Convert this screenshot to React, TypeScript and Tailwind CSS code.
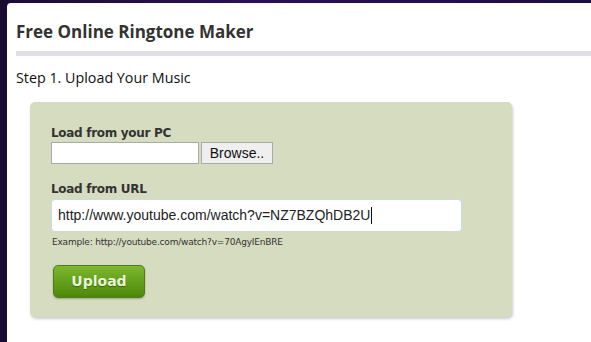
export default function App() {
  return (
    <div className="h-[342px] w-[591px] overflow-hidden bg-[linear-gradient(90deg,#1a0b33,#2a0f5a_40%,#1c0c4a)] pl-[7px] pt-[3px]">
      <div className="h-full rounded-tl-[4px] bg-white pl-[9px]">
        <h1 className="pt-[17px] text-[17px] font-bold leading-[24px] text-[#333] [font-family:'Open_Sans',sans-serif]">
          Free Online Ringtone Maker
        </h1>
        <div className="mt-[7px] h-[5px] bg-[#dde1e5]" />
        <p className="mt-[12px] text-[14.3px] leading-[20px] text-[#111] [font-family:'Open_Sans',sans-serif]">
          Step 1. Upload Your Music
        </p>
        <div className="ml-[14px] mt-[14px] h-[215px] w-[482px] rounded-[5px] bg-[#d6dcbf] pl-[21px] pt-[23px] shadow-[1px_2px_3px_rgba(0,0,0,0.2)]">
          <label className="block text-[12px] font-bold leading-[16px] text-[#333] [font-family:'DejaVu_Sans',sans-serif] tracking-[-0.3px]">
            Load from your PC
          </label>
          <div className="mt-[1px] flex gap-[2px]">
            <div className="h-[22px] w-[148px] border border-[#a9a9a9] bg-white" />
            <button className="h-[22px] w-[72px] border border-[#a9a9a9] bg-[#efefef] text-[14px] leading-[18px] text-[#111] [font-family:'Liberation_Sans',sans-serif]">
              Browse..
            </button>
          </div>
          <label className="mt-[17px] block text-[12px] font-bold leading-[16px] text-[#333] [font-family:'DejaVu_Sans',sans-serif] tracking-[-0.3px]">
            Load from URL
          </label>
          <div className="mt-[2px] flex h-[33px] w-[411px] items-center rounded-[4px] border border-[#c8dbe9] bg-white pl-[6px] text-[14px] text-[#222] [font-family:'Liberation_Sans',sans-serif]">
            http://www.youtube.com/watch?v=NZ7BZQhDB2U
            <span className="ml-[1px] inline-block h-[17px] w-[1px] bg-[#111]" />
          </div>
          <p className="mt-[4px] pl-[1px] text-[9px] leading-[12px] text-[#333] [font-family:'DejaVu_Sans',sans-serif] tracking-[-0.2px]">
            Example: http://youtube.com/watch?v=70AgyIEnBRE
          </p>
          <button className="ml-[2px] mt-[17px] h-[33px] w-[92px] rounded-[5px] border border-[#4e7d18] bg-[linear-gradient(#7db830,#4d880a)] text-[14px] font-bold text-[#e8f4d4] shadow-[0_1px_2px_rgba(0,0,0,0.25)] [font-family:'DejaVu_Sans',sans-serif] [text-shadow:0_1px_1px_rgba(0,0,0,0.35)]">
            Upload
          </button>
        </div>
      </div>
    </div>
  );
}
